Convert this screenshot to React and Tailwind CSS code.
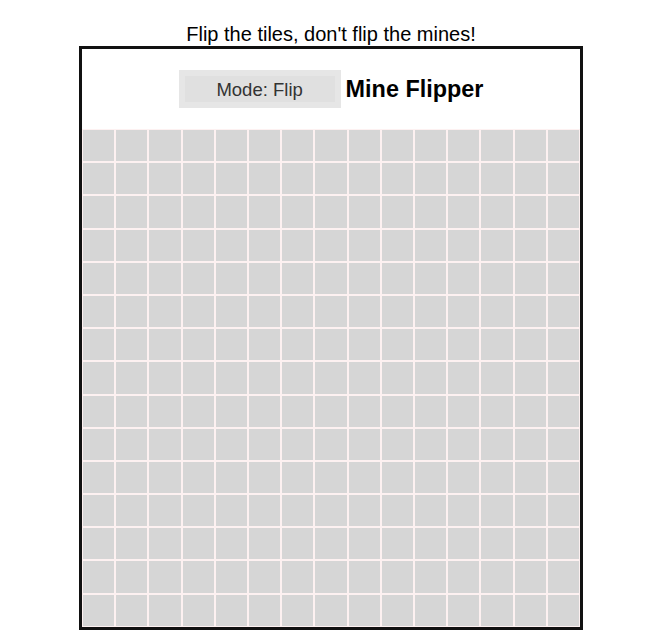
import { useState } from 'react'

const SIZE = 15

export default function App() {
  const [mode, setMode] = useState('Flip')
  const cells = Array.from({ length: SIZE * SIZE }, (_, i) => i)

  return (
    <div
      className="min-h-screen bg-white flex flex-col items-center pt-[23px] pl-[14px]"
      style={{ fontFamily: '"Liberation Sans", Arial, sans-serif' }}
    >
      <div className="text-[20px] leading-[23px] text-black">
        Flip the tiles, don't flip the mines!
      </div>

      <div className="w-[504px] border-[3px] border-[#111111] bg-white">
        <div className="h-[80px] flex items-center justify-center gap-[5px]">
          <button
            onClick={() => setMode(mode === 'Flip' ? 'Flag' : 'Flip')}
            className="w-[162px] h-[38px] border-[6px] border-[#e6e6e6] bg-[#e0e0e0] text-[18.5px] text-[#333333] leading-none pt-[2px]"
          >
            Mode: {mode}
          </button>
          <h1 className="text-[23.4px] font-bold text-black leading-none pt-[2px]">Mine Flipper</h1>
        </div>

        <div className="grid grid-cols-[repeat(15,1fr)] bg-[#fdf1f1]">
          {cells.map((i) => (
            <div key={i} className="h-[33.2px] border border-[#fdf1f1] bg-[#d6d6d6]" />
          ))}
        </div>
      </div>
    </div>
  )
}
